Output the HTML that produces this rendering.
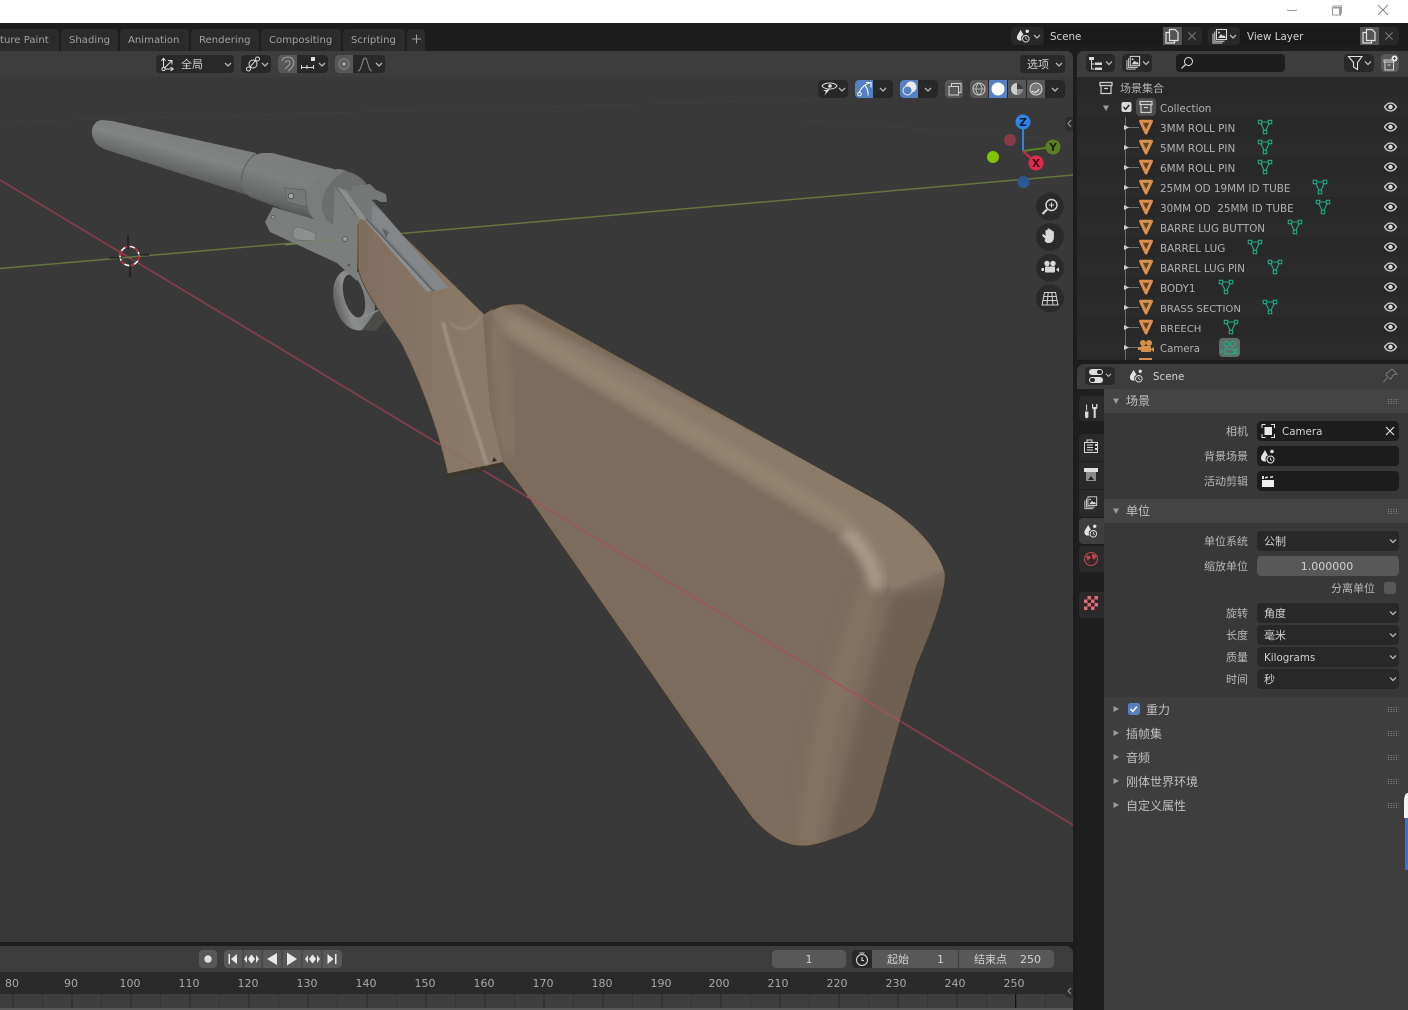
<!DOCTYPE html>
<html><head><meta charset="utf-8"><style>
html,body{margin:0;padding:0;background:#1d1d1d;width:1408px;height:1010px;overflow:hidden}
svg{display:block}
text{font-family:"DejaVu Sans","Noto Sans CJK SC",sans-serif;font-size:11px;fill:#b4b4b4}
.tab{fill:#a0a0a0;font-size:10.1px}
.l{text-anchor:end;fill:#b8b8b8}
.w{fill:#d0d0d0}
.lat{fill:#d0d0d0;font-size:10.3px}
.c{text-anchor:middle;fill:#d0d0d0}
.o{fill:#b0b0b0;font-size:10.4px}
.n{text-anchor:middle;fill:#a8a8a8;font-size:11px}
.h{fill:#c0c0c0;font-size:12px}
</style></head><body>
<svg width="1408" height="1010" viewBox="0 0 1408 1010" xmlns="http://www.w3.org/2000/svg">
<defs>
<symbol id="ch" viewBox="0 0 8 6" overflow="visible"><path d="M1 1l3 3 3-3" fill="none" stroke="#b8b8b8" stroke-width="1.3"/></symbol>
<symbol id="tri" viewBox="0 0 16 16"><path d="M2.500 2.200H13.500L8 14Z" fill="#5a4630" stroke="#d8904c" stroke-width="3" stroke-linejoin="round"/></symbol>
<symbol id="m" viewBox="0 0 16 16"><path d="M3 3H13L8 13Z" fill="none" stroke="#1fa884" stroke-width="1.100"/><path d="M1.300 1.300h3.400v3.400h-3.400zM11.300 1.300h3.400v3.400h-3.400zM6.300 11.300h3.400v3.400h-3.400z" fill="#282828" stroke="#1fa884" stroke-width="1.100"/></symbol>
<symbol id="eye" viewBox="0 0 14 10"><path d="M1 5C3 1.800 5 1 7 1s4 .8 6 4c-2 3.200-4 4-6 4S3 8.200 1 5Z" fill="none" stroke="#d8d8d8" stroke-width="1.300"/><circle cx="7" cy="5" r="2.200" fill="#d8d8d8"/></symbol>
<symbol id="sc" viewBox="0 0 16 16"><path d="M5 2C3.500 5 1 7.500 1 10s2 3.500 4 3.500c.8 0 1.200-.3 1.200-.3C5 11 5.500 8 8 7.500 7 5.500 6 4 5 2Z" fill="#e2e2e2"/><circle cx="12" cy="3.500" r="1.800" fill="#e2e2e2"/><circle cx="10.500" cy="11.500" r="3.500" fill="none" stroke="#e2e2e2" stroke-width="1"/><path d="M10.500 9.500v2l1.500 1" fill="none" stroke="#e2e2e2" stroke-width=".8"/></symbol>
<symbol id="copy" viewBox="0 0 16 16"><path d="M5.500 1.500H11l3 3v8H5.500Z M5.500 4.500H2V15H10.500V12.500" fill="none" stroke="#e0e0e0" stroke-width="1.200"/></symbol>
<symbol id="x" viewBox="0 0 10 10"><path d="M1 1l8 8M9 1l-8 8" stroke="#777" stroke-width="1.200"/></symbol>
<symbol id="vl" viewBox="0 0 16 16"><path d="M4.500 1.500h10v10h-10Z" fill="none" stroke="#d8d8d8" stroke-width="1.100"/><path d="M6 10l3-4 2 2 1-1 2 3Z" fill="#d8d8d8"/><circle cx="7" cy="4.500" r="1" fill="#d8d8d8"/><path d="M2.800 3.500v9.700h9.700M1 5.500v9.500h9.500" fill="none" stroke="#d8d8d8" stroke-width="1"/></symbol>
<symbol id="grip" viewBox="0 0 11 7"><path d="M0 1.500h11M0 3.500h11M0 5.500h11" stroke="#8a8a8a" stroke-width="1" stroke-dasharray="1 1.670"/></symbol>
<symbol id="tr" viewBox="0 0 8 8"><path d="M1.500 1L7 4 1.500 7Z" fill="#9c9c9c"/></symbol>
<symbol id="td" viewBox="0 0 8 8"><path d="M1 1.500L7 1.500 4 7Z" fill="#9c9c9c"/></symbol>
<symbol id="coll" viewBox="0 0 14 14"><path d="M1 1.500h12v3H1ZM2 4.500v8h10v-8M5 7.500h4" fill="none" stroke="#d0d0d0" stroke-width="1.200"/></symbol>
<linearGradient id="bar" gradientUnits="userSpaceOnUse" x1="172" y1="125" x2="158" y2="176"><stop offset="0" stop-color="#7b7d7d"/><stop offset=".45" stop-color="#828484"/><stop offset=".8" stop-color="#646666"/><stop offset="1" stop-color="#484a4a"/></linearGradient>
<linearGradient id="bar2" gradientUnits="userSpaceOnUse" x1="298" y1="150" x2="280" y2="212"><stop offset="0" stop-color="#7a7c7c"/><stop offset=".5" stop-color="#7f8181"/><stop offset=".85" stop-color="#666868"/><stop offset="1" stop-color="#4f5151"/></linearGradient>
<linearGradient id="fw" gradientUnits="userSpaceOnUse" x1="370" y1="300" x2="470" y2="300"><stop offset="0" stop-color="#806f5e"/><stop offset="1" stop-color="#8a7a68"/></linearGradient>
<linearGradient id="rg" gradientUnits="userSpaceOnUse" x1="333" y1="300" x2="375" y2="300"><stop offset="0" stop-color="#5c5e5e"/><stop offset=".35" stop-color="#8c8e8e"/><stop offset="1" stop-color="#777979"/></linearGradient>
<filter id="b1" x="-20%" y="-20%" width="140%" height="140%"><feGaussianBlur stdDeviation="1"/></filter>
<filter id="b3" x="-30%" y="-30%" width="160%" height="160%"><feGaussianBlur stdDeviation="3"/></filter>
<filter id="b5" x="-30%" y="-30%" width="160%" height="160%"><feGaussianBlur stdDeviation="5"/></filter>
<filter id="b7" x="-30%" y="-30%" width="160%" height="160%"><feGaussianBlur stdDeviation="7"/></filter>
<clipPath id="stockclip"><path d="M483 316C490 308 510 302 524 304L877 500C905 516 935 540 945 572C948 590 928 640 917 665L900 722L876 808C872 822 860 830 848 834C830 840 815 847 800 846C780 845 765 832 752 818L700 744L523 490L503 463L490 410Z"/></clipPath>
<pattern id="tk" patternUnits="userSpaceOnUse" x="12.500" y="0" width="59" height="20"><rect width="59" height="20" fill="#3e3e3e"/><rect x="0" width="1" height="20" fill="#2a2a2a"/><rect x="29.500" width="1" height="20" fill="#353535"/></pattern>
</defs>

<!-- window frame -->
<rect width="1408" height="1010" fill="#1d1d1d"/>
<rect width="1408" height="23" fill="#fff"/>
<path d="M1287 10.500h10" stroke="#999" stroke-width="1"/>
<path d="M1333 7.500h7.500v8M1333 7.500v-1.500h8.500v7.500" fill="none" stroke="#999"/><rect x="1332.500" y="8" width="7" height="7" fill="#fff" stroke="#999"/>
<path d="M1378 5l10 10M1388 5l-10 10" stroke="#888" stroke-width="1"/>

<!-- workspace tabs -->
<g fill="#2b2b2b">
<path d="M0 29H55a4 4 0 0 1 4 4V51H0Z"/>
<rect x="61" y="29" width="57" height="24" rx="4"/>
<rect x="120" y="29" width="69" height="24" rx="4"/>
<rect x="191" y="29" width="68" height="24" rx="4"/>
<rect x="261" y="29" width="80" height="24" rx="4"/>
<rect x="343" y="29" width="62" height="24" rx="4"/>
<rect x="407" y="29" width="18" height="24" rx="4"/>
</g>
<text class="tab" x="0" y="43">ture Paint</text>
<text class="tab" x="69" y="43">Shading</text>
<text class="tab" x="128" y="43">Animation</text>
<text class="tab" x="199" y="43">Rendering</text>
<text class="tab" x="269" y="43">Compositing</text>
<text class="tab" x="351" y="43">Scripting</text>
<path d="M412 39h9M416.500 34.500v9" stroke="#a0a0a0" stroke-width="1.100"/>

<!-- scene / view layer -->
<rect x="1011" y="27" width="33" height="18" rx="4" fill="#282828"/>
<use href="#sc" x="1016" y="28" width="15" height="15"/><use href="#ch" x="1033" y="34" width="8" height="6"/>
<rect x="1044" y="27" width="119" height="18" fill="#1a1a1a"/>
<text class="lat" x="1050" y="40">Scene</text>
<rect x="1163" y="27" width="19" height="18" fill="#545454"/>
<use href="#copy" x="1164" y="28" width="16" height="16"/>
<path d="M1183 27h15a4 4 0 0 1 4 4v10a4 4 0 0 1-4 4h-15Z" fill="#282828"/>
<use href="#x" x="1187.500" y="31.500" width="9" height="9"/>
<rect x="1208" y="27" width="32" height="18" rx="4" fill="#282828"/>
<use href="#vl" x="1212" y="28" width="16" height="16"/><use href="#ch" x="1229" y="34" width="8" height="6"/>
<rect x="1240" y="27" width="120" height="18" fill="#1a1a1a"/>
<text class="lat" x="1247" y="40">View Layer</text>
<rect x="1360" y="27" width="19" height="18" fill="#545454"/>
<use href="#copy" x="1361" y="28" width="16" height="16"/>
<path d="M1379 27h16a4 4 0 0 1 4 4v10a4 4 0 0 1-4 4h-16Z" fill="#282828"/>
<use href="#x" x="1384.500" y="31.500" width="9" height="9"/>

<!-- viewport -->
<path d="M0 51H1066a7 7 0 0 1 7 7V942H0Z" fill="#393939"/>
<path d="M0 51H1066a7 7 0 0 1 7 7V77H0Z" fill="#3d3d3d"/>
<path d="M0 122L1073 92M800 120L1073 140" stroke="#3e3e3e" stroke-width="1" fill="none"/>

<!-- axes -->
<path d="M0 180L1073 825" stroke="#8a3d4b" stroke-width="1.600"/>
<path d="M0 268.500L1073 175" stroke="#647540" stroke-width="1.500"/>

<!-- gun: barrel -->
<path d="M103 120C96 120 91 126 92 134C93 141 97 146 104 149L247 195L256 153L112 121Z" fill="url(#bar)"/>
<path d="M263 153C250 154 243 165 241 178C241 188 245 193 250 197L330 227L362 195L338 170L272 153Z" fill="url(#bar2)"/>
<path d="M255 154C247 160 242 170 241 181" fill="none" stroke="#555" stroke-width=".8"/>
<!-- rear ring & lug -->
<path d="M338 169C322 172 310 182 307 196C306 206 308 214 316 221L332 226L362 190C358 178 350 170 338 169Z" fill="#7b7d7d"/>
<path d="M344 171C334 178 323 190 322 202C321 212 325 220 332 225L350 208L366 183C360 176 352 172 344 171Z" fill="#6c6e6e"/>
<path d="M285 188L305 190L307 207L287 202Z" fill="#777979" stroke="#5c5c5c" stroke-width=".7"/>
<circle cx="291" cy="196" r="2.800" fill="#a5a7a7" stroke="#444" stroke-width=".8"/>
<!-- trigger guard -->
<ellipse cx="354" cy="300" rx="20" ry="31" transform="rotate(-15 354 300)" fill="url(#rg)"/>
<ellipse cx="354" cy="296" rx="10" ry="22" transform="rotate(-15 354 296)" fill="#393939"/>
<path d="M368 322L380 306L386 320L375 331L362 330Z" fill="#4a4a48"/>
<path d="M362 318L381 309" stroke="#8d8f8f" stroke-width="1.300"/>
<!-- hammer -->
<path d="M352 186L361 185L370 184L376 190L386 194L387 202L374 202L372 206L378 216L392 236L372 232L352 200Z" fill="#757777"/>
<path d="M372 200C375 199 378 200 380 202L374 207Z" fill="#393939"/>
<!-- slot -->
<path d="M338 187L360 220L427 292L449 288L381 210L370 198Z" fill="#757879"/>
<path d="M372 222L436 291L449 288L382 212L372 205Z" fill="#83878a"/>
<path d="M337 187L360 220L427 292L433 291L366 219L346 191Z" fill="#8c8e8e"/>
<path d="M366 219L433 291" stroke="#55585a" stroke-width="1"/>
<path d="M382 228L389 232L386 238Z" fill="#5f6263"/>
<!-- receiver plate -->
<path d="M335 187L360 220C358 224 358 228 358 232L357 281L337 263L270 232L265 222L273 207L333 225Z" fill="#7c7e7e"/>
<path d="M293 233C293 227 298 226 302 228L316 233L315 241L297 240C294 239 293 236 293 233Z" fill="#8d8f8f" stroke="#5a5a5a" stroke-width=".5"/>
<circle cx="273" cy="217" r="1.800" fill="#9a9c9c" stroke="#444" stroke-width=".6"/>
<circle cx="345" cy="239" r="2.300" fill="#9a9c9c" stroke="#444" stroke-width=".6"/>
<circle cx="349" cy="265" r="1.300" fill="#555"/>
<path d="M285 245L340 239" stroke="#7d8a5c" stroke-width="1"/>

<!-- forend wood -->
<path d="M360 219C364 219 366 222 368 224L427 292L449 288L402 234L484 314L496 380L503 463L448 476C442 445 427 395 402 345C385 318 362 290 358 268L358 224Z" fill="url(#fw)"/>
<path d="M358 224L358 268C362 290 385 318 402 345C427 395 442 445 448 476L503 463M402 234L484 314" fill="none" stroke="#4b4136" stroke-width=".7"/>
<path d="M445 474L503 462L503 466L448 478Z" fill="#3c352c"/>
<path d="M443 322C452 360 470 410 487 465" fill="none" stroke="#a09282" stroke-width="3.500" filter="url(#b1)"/>
<path d="M450 322C458 332 470 332 481 316" fill="none" stroke="#9f917f" stroke-width="1.500" filter="url(#b1)"/>

<!-- main stock -->
<path d="M483 316C490 308 510 302 524 304L877 500C905 516 935 540 945 572C948 590 928 640 917 665L900 722L876 808C872 822 860 830 848 834C830 840 815 847 800 846C780 845 765 832 752 818L700 744L523 490L503 463L490 410Z" fill="#7b6c5b"/>
<g clip-path="url(#stockclip)">
<path d="M490 300L880 495L955 565L893 592L870 570L855 545L520 345L498 330Z" fill="#8b7c6a" filter="url(#b3)"/>
<path d="M893 596L955 585L905 860L825 850L866 690Z" fill="#6e6153" filter="url(#b5)"/>
<path d="M868 590C862 620 845 665 830 712C820 760 812 800 806 850" fill="none" stroke="#827361" stroke-width="24" filter="url(#b7)"/>
<path d="M508 322L850 525" fill="none" stroke="#95866f" stroke-width="12" filter="url(#b5)"/>
<path d="M845 532C862 545 874 565 877 590" fill="none" stroke="#a89b88" stroke-width="15" filter="url(#b5)"/>
<path d="M496 325L510 455" fill="none" stroke="#857664" stroke-width="16" filter="url(#b5)"/>
<path d="M485 318C486 370 488 420 494 455" fill="none" stroke="#6e6152" stroke-width=".7" opacity=".4"/>
</g>
<path d="M493 310C500 305 512 303 524 304L877 500C905 516 935 540 945 572C948 590 928 640 917 665L900 722L876 808C872 822 860 830 848 834C830 840 815 847 800 846C780 845 765 832 752 818L700 744L523 490L503 463" fill="none" stroke="#40372d" stroke-width="1"/>
<path d="M492 462L494 457L497 461Z" fill="#332d26"/>
<!-- red axis over stock -->
<path d="M527 496.700L900 721" stroke="#a0535b" stroke-width="1.500"/>
<path d="M437 442.600L480 468.500" stroke="#a0535b" stroke-width="1.200" opacity=".35"/>

<!-- 3d cursor -->
<circle cx="129.500" cy="256" r="9.500" fill="none" stroke="#fff" stroke-width="1.500"/>
<circle cx="129.500" cy="256" r="9.500" fill="none" stroke="#b9242a" stroke-width="1.600" stroke-dasharray="5 5"/>
<path d="M128 236V249M130 263V277M109 258H122M138 255H149" stroke="#111" stroke-width="1"/>

<!-- viewport header buttons -->
<rect x="156" y="55" width="78" height="18" rx="4" fill="#282828"/>
<path d="M163.500 58v11h10M163.500 58l-2 3M163.500 58l2 3M173.500 69l-3-2M173.500 69l-3 2M163.500 69l8-8M168 60.500h4v4" fill="none" stroke="#dedede" stroke-width="1"/><circle cx="163.500" cy="69" r="1.600" fill="#282828" stroke="#dedede"/>
<text class="w" x="181" y="68">全局</text>
<use href="#ch" x="224" y="62" width="8" height="6"/>
<rect x="241" y="55" width="30" height="18" rx="4" fill="#282828"/>
<circle cx="253" cy="64" r="4" fill="none" stroke="#d6d6d6" stroke-width="1"/><circle cx="248.500" cy="69" r="2" fill="none" stroke="#d6d6d6"/><circle cx="257.500" cy="59" r="2" fill="none" stroke="#d6d6d6"/><path d="M250 67L256 60" stroke="#d6d6d6"/>
<use href="#ch" x="261" y="62" width="8" height="6"/>
<rect x="278" y="55" width="50" height="18" rx="4" fill="#282828"/>
<path d="M282 55h15v18h-15a4 4 0 0 1-4-4V59a4 4 0 0 1 4-4Z" fill="#585858"/>
<path d="M282 61C283 56 291 56 293 60C295 64 293 67 288 71M285 63C286 60 290 60 290 63C290 65 288 66 285 69" fill="none" stroke="#a0a0a0" stroke-width="1.100"/>
<path d="M301.500 65v4M307 65v4M313.500 65v4M301 67.500h12" stroke="#d8d8d8" stroke-width="1" fill="none"/><rect x="311" y="57" width="4" height="4" fill="#e0e0e0"/>
<use href="#ch" x="318" y="62" width="8" height="6"/>
<rect x="335" y="55" width="50" height="18" rx="4" fill="#282828"/>
<path d="M339 55h14v18h-14a4 4 0 0 1-4-4V59a4 4 0 0 1 4-4Z" fill="#585858"/>
<circle cx="344" cy="64" r="5" fill="none" stroke="#8a8a8a"/><circle cx="344" cy="64" r="1.700" fill="#a8a8a8"/>
<path d="M358 71C362 71 362 58 365 58C368 58 368 71 372 71" fill="none" stroke="#888" stroke-width="1"/>
<use href="#ch" x="375" y="62" width="8" height="6"/>
<rect x="1020" y="55" width="45" height="18" rx="4" fill="#282828"/>
<text class="w" x="1027" y="68">选项</text>
<use href="#ch" x="1055" y="62" width="8" height="6"/>

<!-- overlay row -->
<rect x="818" y="80" width="30" height="18" rx="4" fill="#282828"/>
<path d="M822 86C824 83 828 83 830 83s5 0 7 3c-2 3-5 3-7 3s-6 0-8-3Z" fill="none" stroke="#e0e0e0" stroke-width="1"/><circle cx="830" cy="86" r="1.800" fill="#e0e0e0"/>
<path d="M830 89l-7 1.500 3 1-1.500 4z" fill="#e6e6e6"/>
<use href="#ch" x="838" y="87" width="8" height="6"/>
<rect x="855" y="80" width="38" height="18" rx="4" fill="#282828"/>
<path d="M859 80h14v18h-14a4 4 0 0 1-4-4V84a4 4 0 0 1 4-4Z" fill="#5680c2"/>
<path d="M859 93C861 88 865 84 871 82.500M866 82.500h5v5M865 85.500c2.500 3 3.500 6 3 10" fill="none" stroke="#fff" stroke-width="1"/><circle cx="859.500" cy="94" r="1.800" fill="none" stroke="#fff"/>
<use href="#ch" x="879" y="87" width="8" height="6"/>
<rect x="900" y="80" width="38" height="18" rx="4" fill="#282828"/>
<path d="M904 80h14v18h-14a4 4 0 0 1-4-4V84a4 4 0 0 1 4-4Z" fill="#5680c2"/>
<circle cx="911" cy="87" r="5.500" fill="#eaeaea"/><circle cx="907.500" cy="90.500" r="4.500" fill="#5680c2" stroke="#eaeaea"/>
<use href="#ch" x="924" y="87" width="8" height="6"/>
<rect x="945" y="80" width="18" height="18" rx="4" fill="#585858"/>
<path d="M949 86.500H958.500V95H949ZM951.500 86V83.500H961V92.500H959" fill="none" stroke="#d0d0d0" stroke-width="1"/>
<rect x="970" y="80" width="95" height="18" rx="4" fill="#282828"/>
<path d="M974 80h14v18h-14a4 4 0 0 1-4-4V84a4 4 0 0 1 4-4Z" fill="#585858"/>
<rect x="989" y="80" width="18" height="18" fill="#5680c2"/>
<rect x="1008" y="80" width="18" height="18" fill="#585858"/>
<rect x="1027" y="80" width="18" height="18" fill="#585858"/>
<circle cx="979" cy="89" r="6" fill="none" stroke="#c8c8c8"/><path d="M973 89h12M979 83c-4 3-4 9 0 12M979 83c4 3 4 9 0 12" fill="none" stroke="#c8c8c8" stroke-width=".8"/>
<circle cx="998" cy="89" r="6.500" fill="#fff"/>
<circle cx="1017" cy="89" r="6" fill="#d0d0d0"/><path d="M1017 89V83A6 6 0 0 1 1023 89Z" fill="#3e3e3e"/><path d="M1017 89H1023A6 6 0 0 1 1017 95Z" fill="#8c8c8c"/>
<circle cx="1036" cy="89" r="6" fill="#7a7a7a" stroke="#d8d8d8"/><path d="M1032 91c2 2 5 2 7-2" fill="none" stroke="#e8e8e8" stroke-width="1.200"/>
<use href="#ch" x="1051" y="87" width="8" height="6"/>

<!-- sidebar arrow -->
<path d="M1073 117h-4a4 4 0 0 0-4 4v0 6a4 4 0 0 0 4 4h4Z" fill="#2d2d2d"/>
<path d="M1071 120l-3 3.500 3 3.500" fill="none" stroke="#999"/>

<!-- gizmo -->
<circle cx="1010" cy="140" r="6" fill="#883a4a"/>
<circle cx="993" cy="157" r="6" fill="#83c400"/>
<circle cx="1023.500" cy="182" r="6" fill="#2a5a90"/>
<path d="M1023 151V125" stroke="#2a86e8" stroke-width="2"/>
<path d="M1023 151L1052 147" stroke="#5c8020" stroke-width="2"/>
<path d="M1023 151L1035 162" stroke="#d02a4a" stroke-width="2"/>
<circle cx="1023" cy="122" r="7.500" fill="#2a86e8"/>
<circle cx="1053" cy="147" r="7.500" fill="#5c8020"/>
<circle cx="1036" cy="163" r="7.500" fill="#e22a50"/>
<text x="1023" y="126" text-anchor="middle" style="fill:#0b1a30;font-weight:bold;font-size:10.500px">Z</text>
<text x="1053" y="151" text-anchor="middle" style="fill:#1a2608;font-weight:bold;font-size:10.500px">Y</text>
<text x="1036" y="167" text-anchor="middle" style="fill:#3a0612;font-weight:bold;font-size:10.500px">X</text>

<!-- nav buttons -->
<g fill="#2a2a2a"><circle cx="1050" cy="206.500" r="14"/><circle cx="1050" cy="237" r="14"/><circle cx="1050" cy="268" r="14"/><circle cx="1050" cy="298.500" r="14"/></g>
<circle cx="1051.500" cy="205" r="5.500" fill="none" stroke="#d8d8d8" stroke-width="1.400"/><path d="M1049 205h5M1051.500 202.500v5" stroke="#d8d8d8"/><path d="M1047 209.500L1042.500 214" stroke="#d8d8d8" stroke-width="2.200"/>
<path d="M1045.500 239l-3-3c-1-1.500 1-2.500 2-1l1 1V231c0-1.500 2-1.500 2 0v-1.500c0-1.500 2.200-1.500 2.200 0v1c0-1.500 2.200-1.500 2.200 0v1.500c0-1.300 2-1.300 2 0v5c0 4-2 6-5 6s-3.500-1-4.400-3Z" fill="#d8d8d8"/>
<circle cx="1047" cy="263.500" r="2.700" fill="#d8d8d8"/><circle cx="1053" cy="263.500" r="2.700" fill="#d8d8d8"/><rect x="1045" y="266.500" width="10" height="6" rx="1" fill="#d8d8d8"/><path d="M1041.500 268h2.500v3h-2.500ZM1056 269.500l3-2v4.500z" fill="#d8d8d8"/>
<path d="M1044.500 292.500H1055.500L1058 305H1042ZM1043.500 296.500H1056.500M1043 300.500H1057M1048.200 292.500L1047 305M1051.800 292.500L1053 305" fill="none" stroke="#d0d0d0" stroke-width="1"/>

<!-- timeline -->
<path d="M0 946H1066a7 7 0 0 1 7 7V1008H0Z" fill="#3d3d3d"/>
<rect x="0" y="972" width="1073" height="22" fill="#2a2a2a"/>
<rect x="0" y="994" width="1073" height="14" fill="url(#tk)"/>
<rect x="1015" y="994" width="1" height="14" fill="#151515"/>
<rect x="0" y="1008" width="1073" height="2" fill="#585858"/>
<path d="M1073 984h-4a4 4 0 0 0-4 4v6a4 4 0 0 0 4 4h4Z" fill="#2d2d2d"/><path d="M1071 988l-3 3 3 3" fill="none" stroke="#999"/>
<rect x="199" y="950" width="18" height="18" rx="4" fill="#585858"/><circle cx="208" cy="959" r="3.700" fill="#e0e0e0"/>
<rect x="224" y="950" width="118" height="18" rx="4" fill="#585858"/>
<path d="M243 950v18M262 950v18M282 950v18M302 950v18M322 950v18" stroke="#3d3d3d" stroke-width="1"/>
<g fill="#e8e8e8">
<path d="M228.500 954h1.500v10h-1.500ZM237 954v10l-6-5Z"/>
<path d="M251.500 954.500l3.500 4.500-3.500 4.500-3.500-4.500ZM247 955v8l-3-4ZM256 955v8l3-4Z"/>
<path d="M277 953v12l-10-6Z"/>
<path d="M287 952.500v13l10-6.500Z"/>
<path d="M312.500 954.500l3.500 4.500-3.500 4.500-3.500-4.500ZM308 955v8l-3-4ZM317 955v8l3-4Z"/>
<path d="M335 954h1.500v10H335ZM327.500 954v10l6-5Z"/>
</g>
<rect x="772" y="950" width="74" height="18" rx="4" fill="#585858"/>
<text class="c" x="809" y="963">1</text>
<rect x="852" y="950" width="20" height="18" rx="4" fill="#282828"/><rect x="866" y="950" width="6" height="18" fill="#282828"/>
<circle cx="862" cy="960" r="5.500" fill="none" stroke="#e0e0e0"/><path d="M859.500 953h5M862 957v3.500h2" fill="none" stroke="#e0e0e0"/>
<rect x="872" y="950" width="182" height="18" rx="4" fill="#585858"/><rect x="872" y="950" width="8" height="18" fill="#585858"/>
<rect x="958" y="950" width="1" height="18" fill="#3d3d3d"/>
<text class="w" x="887" y="963">起始</text><text class="w" x="937" y="963">1</text>
<text class="w" x="974" y="963">结束点</text><text class="w" x="1020" y="963">250</text>
<g>
<text class="n" x="12" y="987">80</text><text class="n" x="71" y="987">90</text><text class="n" x="130" y="987">100</text><text class="n" x="189" y="987">110</text><text class="n" x="248" y="987">120</text><text class="n" x="307" y="987">130</text><text class="n" x="366" y="987">140</text><text class="n" x="425" y="987">150</text><text class="n" x="484" y="987">160</text><text class="n" x="543" y="987">170</text><text class="n" x="602" y="987">180</text><text class="n" x="661" y="987">190</text><text class="n" x="719" y="987">200</text><text class="n" x="778" y="987">210</text><text class="n" x="837" y="987">220</text><text class="n" x="896" y="987">230</text><text class="n" x="955" y="987">240</text><text class="n" x="1014" y="987">250</text>
</g>

<!-- outliner -->
<path d="M1084 51H1408V360H1077V58a7 7 0 0 1 7-7Z" fill="#282828"/>
<path d="M1084 51H1408V77H1077V58a7 7 0 0 1 7-7Z" fill="#3d3d3d"/>
<rect x="1086" y="54" width="29" height="18" rx="4" fill="#282828"/>
<path d="M1089 57h5v3h-5ZM1095 62.500h7v2.500h-7ZM1095 67.500h7v2.500h-7Z" fill="#d8d8d8" stroke="none"/><path d="M1091.500 60v9h3M1091.500 64h3" fill="none" stroke="#d8d8d8"/>
<use href="#ch" x="1105" y="60.500" width="8" height="6"/>
<rect x="1122" y="54" width="30" height="18" rx="4" fill="#282828"/>
<use href="#vl" x="1126" y="55" width="15" height="15"/><use href="#ch" x="1142" y="60.500" width="8" height="6"/>
<rect x="1176" y="54" width="109" height="18" rx="4" fill="#1d1d1d"/>
<circle cx="1188.500" cy="61.500" r="4" fill="none" stroke="#e0e0e0" stroke-width="1"/><path d="M1185.500 64.500l-4 4" stroke="#e0e0e0" stroke-width="1.200"/>
<rect x="1344" y="54" width="30" height="18" rx="4" fill="#282828"/>
<path d="M1348.500 56.500H1362L1357.500 62.500V69.500L1353.500 67V62.500Z" fill="none" stroke="#e0e0e0" stroke-width="1.100"/><use href="#ch" x="1364" y="60.500" width="8" height="6"/>
<rect x="1381" y="54" width="18" height="18" rx="4" fill="#585858"/>
<path d="M1384 60h10v2h-10ZM1385 62v8h8.500v-8M1387.500 65h3" fill="none" stroke="#d8d8d8"/><circle cx="1394.500" cy="58.500" r="3" fill="#e8e8e8"/><path d="M1393 58.500h3M1394.500 57v3" stroke="#444" stroke-width=".8"/>

<use href="#coll" x="1099" y="81" width="14" height="14"/>
<text class="o" x="1120" y="92" style="font-size:11px">场景集合</text>
<g fill="#2b2b2b">
<rect x="1077" y="97" width="331" height="20"/><rect x="1077" y="137" width="331" height="20"/><rect x="1077" y="177" width="331" height="20"/><rect x="1077" y="217" width="331" height="20"/><rect x="1077" y="257" width="331" height="20"/><rect x="1077" y="297" width="331" height="20"/><rect x="1077" y="337" width="331" height="20"/>
</g>
<use href="#td" x="1102" y="104" width="8" height="8"/>
<rect x="1121.500" y="102" width="10" height="10" rx="2" fill="#d8d8d8"/>
<path d="M1123.500 107l2.200 2.300 3.500-4.300" fill="none" stroke="#222" stroke-width="1.400"/>
<rect x="1136" y="98" width="20" height="18" rx="4" fill="#4c4c4c"/>
<use href="#coll" x="1139" y="100" width="14" height="14"/>
<text class="o" x="1160" y="112">Collection</text>
<path d="M1125.500 117V360" stroke="#6e6e6e"/>
<g stroke="#6e6e6e"><path d="M1125 127.500h14M1125 147.500h14M1125 167.500h14M1125 187.500h14M1125 207.500h14M1125 227.500h14M1125 247.500h14M1125 267.500h14M1125 287.500h14M1125 307.500h14M1125 327.500h14M1125 347.500h14"/></g>
<g fill="#d0d0d0"><path d="M1124 125l5 2.500-5 2.500ZM1124 145l5 2.500-5 2.500ZM1124 165l5 2.500-5 2.500ZM1124 185l5 2.500-5 2.500ZM1124 205l5 2.500-5 2.500ZM1124 225l5 2.500-5 2.500ZM1124 245l5 2.500-5 2.500ZM1124 265l5 2.500-5 2.500ZM1124 285l5 2.500-5 2.500ZM1124 305l5 2.500-5 2.500ZM1124 325l5 2.500-5 2.500ZM1124 345l5 2.500-5 2.500Z"/></g>
<use href="#tri" x="1138" y="119" width="16" height="16"/><use href="#tri" x="1138" y="139" width="16" height="16"/><use href="#tri" x="1138" y="159" width="16" height="16"/><use href="#tri" x="1138" y="179" width="16" height="16"/><use href="#tri" x="1138" y="199" width="16" height="16"/><use href="#tri" x="1138" y="219" width="16" height="16"/><use href="#tri" x="1138" y="239" width="16" height="16"/><use href="#tri" x="1138" y="259" width="16" height="16"/><use href="#tri" x="1138" y="279" width="16" height="16"/><use href="#tri" x="1138" y="299" width="16" height="16"/><use href="#tri" x="1138" y="319" width="16" height="16"/>
<g fill="#d69149"><circle cx="1143" cy="343" r="3"/><circle cx="1149" cy="343" r="3"/><rect x="1141" y="346" width="10" height="6" rx="1"/><path d="M1138 347h3v3h-3ZM1151 349l3-2v5l-3-2Z"/><rect x="1139" y="358" width="13" height="2"/></g>
<text class="o" x="1160" y="132">3MM ROLL PIN</text>
<text class="o" x="1160" y="152">5MM ROLL PIN</text>
<text class="o" x="1160" y="172">6MM ROLL PIN</text>
<text class="o" x="1160" y="192">25MM OD 19MM ID TUBE</text>
<text class="o" x="1160" y="212">30MM OD &#160;25MM ID TUBE</text>
<text class="o" x="1160" y="232" style="font-size:10.300px">BARRE LUG BUTTON</text>
<text class="o" x="1160" y="252">BARREL LUG</text>
<text class="o" x="1160" y="272" style="font-size:10.300px">BARREL LUG PIN</text>
<text class="o" x="1160" y="292">BODY1</text>
<text class="o" x="1160" y="312" style="font-size:10.100px">BRASS SECTION</text>
<text class="o" x="1160" y="332" style="font-size:10.100px">BREECH</text>
<text class="o" x="1160" y="352" style="font-size:10.200px">Camera</text>
<use href="#m" x="1257" y="119" width="16" height="16"/><use href="#m" x="1257" y="139" width="16" height="16"/><use href="#m" x="1257" y="159" width="16" height="16"/><use href="#m" x="1312" y="179" width="16" height="16"/><use href="#m" x="1315" y="199" width="16" height="16"/><use href="#m" x="1287" y="219" width="16" height="16"/><use href="#m" x="1247" y="239" width="16" height="16"/><use href="#m" x="1267" y="259" width="16" height="16"/><use href="#m" x="1218" y="279" width="16" height="16"/><use href="#m" x="1262" y="299" width="16" height="16"/><use href="#m" x="1223" y="319" width="16" height="16"/>
<rect x="1219" y="338" width="21" height="19" rx="4" fill="#5e6e68"/>
<g fill="none" stroke="#22b08c" stroke-width="1"><circle cx="1226.500" cy="344" r="2.500"/><circle cx="1233" cy="344" r="2.500"/><rect x="1225" y="349" width="9" height="5"/><path d="M1222 350v3M1234 351l3-2v5l-3-2"/></g>
<use href="#eye" x="1383.500" y="102" width="14" height="10"/><use href="#eye" x="1383.500" y="122" width="14" height="10"/><use href="#eye" x="1383.500" y="142" width="14" height="10"/><use href="#eye" x="1383.500" y="162" width="14" height="10"/><use href="#eye" x="1383.500" y="182" width="14" height="10"/><use href="#eye" x="1383.500" y="202" width="14" height="10"/><use href="#eye" x="1383.500" y="222" width="14" height="10"/><use href="#eye" x="1383.500" y="242" width="14" height="10"/><use href="#eye" x="1383.500" y="262" width="14" height="10"/><use href="#eye" x="1383.500" y="282" width="14" height="10"/><use href="#eye" x="1383.500" y="302" width="14" height="10"/><use href="#eye" x="1383.500" y="322" width="14" height="10"/><use href="#eye" x="1383.500" y="342" width="14" height="10"/>
<path d="M1077 360H1408V364H1077Z" fill="#1d1d1d"/>

<!-- properties -->
<path d="M1084 364H1408V1010H1077V371a7 7 0 0 1 7-7Z" fill="#1f1f1f"/>
<path d="M1084 364H1408V389H1077V371a7 7 0 0 1 7-7Z" fill="#3d3d3d"/>
<rect x="1104" y="389" width="304" height="621" fill="#3e3e3e"/>
<rect x="1104" y="389" width="304" height="24" fill="#444"/>
<rect x="1104" y="413" width="304" height="86" fill="#383838"/>
<rect x="1104" y="499" width="304" height="24" fill="#444"/>
<rect x="1104" y="523" width="304" height="174" fill="#383838"/>
<rect x="1085" y="367" width="30" height="18" rx="4" fill="#2a2a2a"/>
<rect x="1089" y="369" width="14" height="6" rx="3" fill="#e0e0e0"/><rect x="1089" y="377" width="14" height="6" rx="3" fill="#e0e0e0"/><rect x="1097" y="370" width="5" height="4" rx="2" fill="#2a2a2a"/><rect x="1090" y="378" width="5" height="4" rx="2" fill="#2a2a2a"/>
<use href="#ch" x="1105" y="373" width="7" height="5"/>
<use href="#sc" x="1129" y="368" width="15" height="15"/>
<text class="lat" x="1153" y="380">Scene</text>
<path d="M1386 374l6-5 5 5-4 1-2 4-1 0-4-4ZM1387 378l-3.500 4M1392 369l5 5" fill="none" stroke="#7c7c7c" stroke-width="1"/>

<!-- tabs -->
<g fill="#2a2a2a">
<path d="M1104 396h-21a4 4 0 0 0-4 4v17a4 4 0 0 0 4 4h21Z"/>
<path d="M1104 434h-21a4 4 0 0 0-4 4v59a4 4 0 0 0 4 4h21Z"/>
<path d="M1104 490h-21a4 4 0 0 0-4 4v19a4 4 0 0 0 4 4h21Z"/>
<path d="M1104 546h-21a4 4 0 0 0-4 4v18a4 4 0 0 0 4 4h21Z"/>
<path d="M1104 592h-21a4 4 0 0 0-4 4v18a4 4 0 0 0 4 4h21Z"/>
</g>
<path d="M1104 518h-21a4 4 0 0 0-4 4v18a4 4 0 0 0 4 4h21Z" fill="#3e3e3e"/>
<path d="M1079 461.500h25M1079 489.500h25" stroke="#1f1f1f"/>
<path d="M1086.600 404.500v6" stroke="#d8d8d8" stroke-width="1"/><path d="M1085 411.500h3.400v5a1.700 1.700 0 0 1-3.400 0ZM1092 404v3.500c0 .8.800 1.500 1.700 1.800V418h2v-8.700c.9-.3 1.700-1 1.700-1.800V404l-1.300 0v3h-3v-3Z" fill="#d8d8d8"/>
<path d="M1084.500 442.500h13v10h-13ZM1087 442.500V440h5v2.500M1087 445h6M1087 447.500h6M1087 450h6" fill="none" stroke="#d8d8d8" stroke-width="1"/><rect x="1095" y="444" width="2" height="2" fill="#d8d8d8"/><rect x="1095" y="448" width="2" height="2" fill="#d8d8d8"/>
<rect x="1084" y="468" width="14" height="4" fill="#e0e0e0"/><path d="M1086 472h10v9h-10Z" fill="#8c8c8c"/><path d="M1088 480l3-4 3 4Z" fill="#222"/>
<use href="#vl" x="1084" y="495" width="14" height="15"/>
<use href="#sc" x="1083.500" y="523" width="15" height="15"/>
<circle cx="1091" cy="559" r="6.500" fill="#3a2528" stroke="#b84a55" stroke-width="1.100"/><path d="M1086 556c2-1 4 0 5 2l-3 2 1 4M1092 553c1 2 4 2 5 3l-3 4-2-3" fill="#b84a55"/>
<rect x="1084" y="596" width="14" height="14" fill="#d8707c"/><path d="M1084 596h3.500v3.500H1084ZM1091 596h3.500v3.500H1091ZM1087.500 599.500h3.500v3.500h-3.500ZM1094.500 599.500H1098v3.500h-3.500ZM1084 603h3.500v3.500H1084ZM1091 603h3.500v3.500H1091ZM1087.500 606.500h3.500V610h-3.500ZM1094.500 606.500H1098V610h-3.500Z" fill="#3a2226"/>

<!-- panels -->
<use href="#td" x="1112" y="397" width="8" height="8"/><text class="h" x="1126" y="405">场景</text><use href="#grip" x="1388" y="398" width="11" height="7"/>
<text class="l" x="1248" y="435">相机</text>
<rect x="1257" y="421" width="142" height="20" rx="4" fill="#1d1d1d"/>
<path d="M1262 428v-3.500h3.500M1271 424.500h3.500v3.500M1274.500 434v3.500H1271M1265.500 437.500H1262V434" fill="none" stroke="#e0e0e0"/><rect x="1264.500" y="427" width="7.500" height="8" fill="#e8e8e8"/>
<text class="lat" x="1282" y="435" style="font-size:10.300px">Camera</text>
<path d="M1386 427l8 8M1394 427l-8 8" stroke="#e0e0e0" stroke-width="1.200"/>
<text class="l" x="1248" y="460">背景场景</text>
<rect x="1257" y="446" width="142" height="20" rx="4" fill="#1d1d1d"/>
<use href="#sc" x="1260" y="448" width="16" height="16"/>
<text class="l" x="1248" y="485">活动剪辑</text>
<rect x="1257" y="471" width="142" height="20" rx="4" fill="#1d1d1d"/>
<rect x="1262" y="480" width="12" height="7" fill="#eee"/><path d="M1262 476h2v3h-2ZM1265 477l3-.5v1.500l-3 .5ZM1270 476.500l3-.5v1.500l-3 .5Z" fill="#ddd"/>

<use href="#td" x="1112" y="507" width="8" height="8"/><text class="h" x="1126" y="515">单位</text><use href="#grip" x="1388" y="508" width="11" height="7"/>
<text class="l" x="1248" y="545">单位系统</text>
<rect x="1257" y="531" width="142" height="20" rx="4" fill="#282828"/><text class="w" x="1264" y="545">公制</text><use href="#ch" x="1389" y="538.500" width="8" height="6"/>
<text class="l" x="1248" y="570">缩放单位</text>
<rect x="1257" y="556" width="142" height="20" rx="4" fill="#585858"/><text class="c" x="1327" y="570">1.000000</text>
<text class="l" x="1375" y="592">分离单位</text>
<rect x="1384" y="582" width="12" height="12" rx="2.500" fill="#585858"/>
<text class="l" x="1248" y="617">旋转</text>
<rect x="1257" y="603" width="142" height="20" rx="4" fill="#282828"/><text class="w" x="1264" y="617">角度</text><use href="#ch" x="1389" y="610.500" width="8" height="6"/>
<text class="l" x="1248" y="639">长度</text>
<rect x="1257" y="625" width="142" height="20" rx="4" fill="#282828"/><text class="w" x="1264" y="639">毫米</text><use href="#ch" x="1389" y="632.500" width="8" height="6"/>
<text class="l" x="1248" y="661">质量</text>
<rect x="1257" y="647" width="142" height="20" rx="4" fill="#282828"/><text class="lat" x="1264" y="661">Kilograms</text><use href="#ch" x="1389" y="654.500" width="8" height="6"/>
<text class="l" x="1248" y="683">时间</text>
<rect x="1257" y="669" width="142" height="20" rx="4" fill="#282828"/><text class="w" x="1264" y="683">秒</text><use href="#ch" x="1389" y="676.500" width="8" height="6"/>

<use href="#tr" x="1112" y="705" width="8" height="8"/>
<rect x="1128" y="703" width="12" height="12" rx="2.500" fill="#5680c2"/><path d="M1130.500 709l2.300 2.400 4-4.800" fill="none" stroke="#fff" stroke-width="1.500"/>
<text class="h" x="1146" y="714">重力</text><use href="#grip" x="1388" y="706" width="11" height="7"/>
<use href="#tr" x="1112" y="729" width="8" height="8"/><text class="h" x="1126" y="738">插帧集</text><use href="#grip" x="1388" y="730" width="11" height="7"/>
<use href="#tr" x="1112" y="753" width="8" height="8"/><text class="h" x="1126" y="762">音频</text><use href="#grip" x="1388" y="754" width="11" height="7"/>
<use href="#tr" x="1112" y="777" width="8" height="8"/><text class="h" x="1126" y="786">刚体世界环境</text><use href="#grip" x="1388" y="778" width="11" height="7"/>
<use href="#tr" x="1112" y="801" width="8" height="8"/><text class="h" x="1126" y="810">自定义属性</text><use href="#grip" x="1388" y="802" width="11" height="7"/>

<!-- right edge stripe -->
<path d="M1408 793h-1c-2 1-3 4-3 10v15h4Z" fill="#f4f4f4"/>
<rect x="1405" y="818" width="3" height="52" fill="#3b6fd6"/>
</svg>
</body></html>
